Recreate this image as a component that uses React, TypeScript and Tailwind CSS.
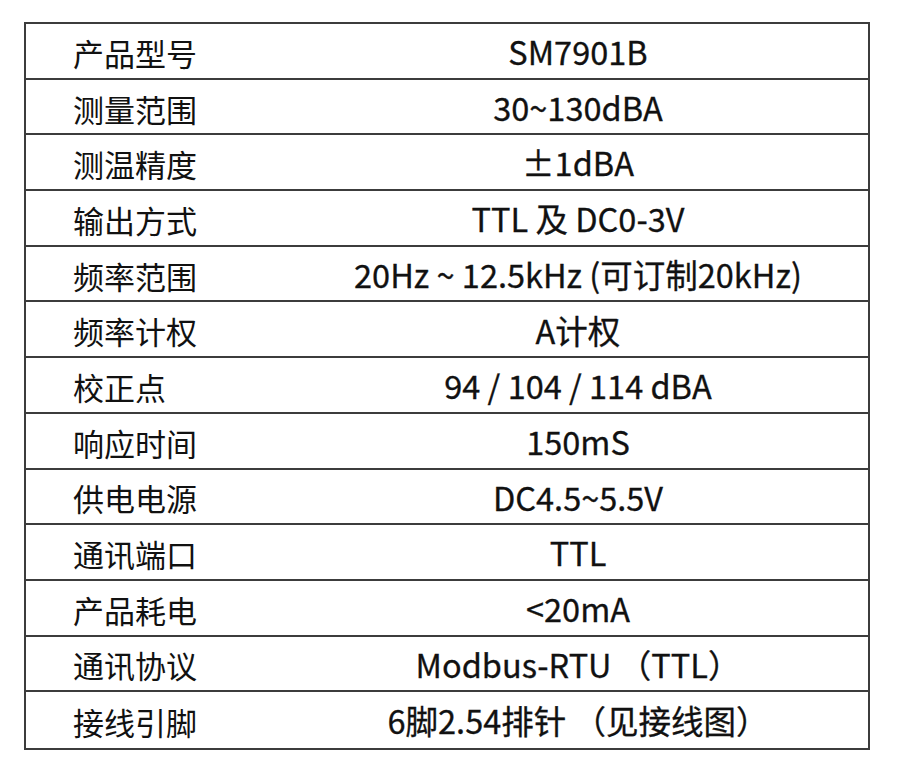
import React from "react";

const rows: [string, string][] = [
  ["产品型号", "SM7901B"],
  ["测量范围", "30~130dBA"],
  ["测温精度", "±1dBA"],
  ["输出方式", "TTL 及 DC0-3V"],
  ["频率范围", "20Hz ~ 12.5kHz (可订制20kHz)"],
  ["频率计权", "A计权"],
  ["校正点", "94 / 104 / 114 dBA"],
  ["响应时间", "150mS"],
  ["供电电源", "DC4.5~5.5V"],
  ["通讯端口", "TTL"],
  ["产品耗电", "<20mA"],
  ["通讯协议", "Modbus-RTU （TTL）"],
  ["接线引脚", "6脚2.54排针 （见接线图）"],
];

export default function App() {
  return (
    <div
      className="w-[900px] h-[770px] bg-white pt-[22px] pl-[24px]"
      style={{ fontFamily: '"Noto Sans CJK SC", "Noto Sans", sans-serif' }}
    >
      <div className="w-[846px] border-2 border-[#3c3c3c] flex flex-col">
        {rows.map(([k, v], i) => (
          <div
            key={k}
            className={
              "flex items-center h-[55.7px] text-[#111] " +
              (i < rows.length - 1 ? "border-b-2 border-[#3c3c3c]" : "")
            }
          >
            <div className="w-[262px] pl-[47px] pt-[3px] text-[31px] leading-none whitespace-nowrap">
              {k}
            </div>
            <div className="flex-1 text-center pt-[1px] text-[32.5px] leading-none whitespace-nowrap [-webkit-text-stroke:0.3px_#111]">
              {v}
            </div>
          </div>
        ))}
      </div>
    </div>
  );
}
